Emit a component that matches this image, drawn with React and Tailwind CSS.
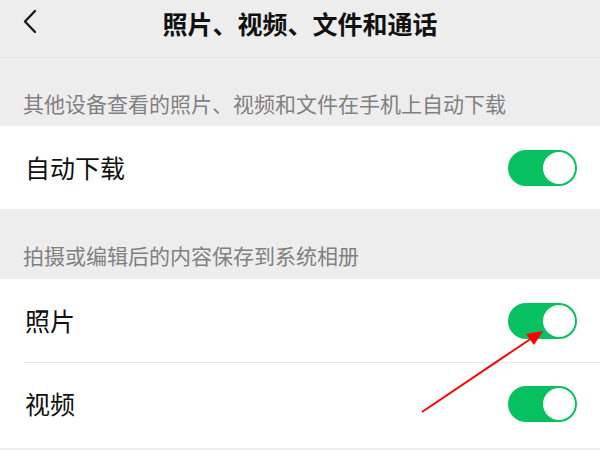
import React from 'react'

const Toggle = () => (
  <div className="w-[69px] h-[36px] rounded-full bg-[#07c160] flex items-center justify-end pr-[2px]">
    <div className="w-[32px] h-[32px] rounded-full bg-white" />
  </div>
)

const Row = ({ label, divider }) => (
  <div className="relative h-[83px] flex items-center justify-between pl-[25px] pr-[23px]">
    {divider && <div className="absolute top-0 left-[24px] right-0 h-px bg-[#e8e8e8]" />}
    <span className="text-[25px] leading-[25px] text-[#111111]">{label}</span>
    <Toggle />
  </div>
)

const Caption = ({ children, top, bottom }) => (
  <div className={`px-[23px] text-[21px] leading-[21px] text-[#808080] ${top} ${bottom}`}>{children}</div>
)

const App = () => {
  return (
    <div className="relative w-[600px] h-[450px] overflow-hidden bg-[#ededed] font-['Noto_Sans_CJK_SC',sans-serif]">
      <div className="relative h-[58px] border-b border-[#e4e4e4]">
        <svg className="absolute left-[21px] top-[9px]" width="18" height="26" viewBox="0 0 18 26" fill="none">
          <polyline points="14,2 4,12.5 14,23" stroke="#1a1a1a" strokeWidth="2.4" strokeLinecap="round" strokeLinejoin="round" />
        </svg>
        <div className="pt-[11px] text-center text-[25px] leading-[25px] font-bold text-[#111111]">
          照片、视频、文件和通话
        </div>
      </div>

      <Caption top="pt-[35px]" bottom="pb-[12px]">其他设备查看的照片、视频和文件在手机上自动下载</Caption>
      <div className="bg-white">
        <Row label="自动下载" />
      </div>

      <Caption top="pt-[36px]" bottom="pb-[13px]">拍摄或编辑后的内容保存到系统相册</Caption>
      <div className="bg-white">
        <Row label="照片" />
        <div className="h-[86px]">
          <Row label="视频" divider />
        </div>
      </div>

      <svg className="absolute inset-0 pointer-events-none" width="600" height="450" viewBox="0 0 600 450">
        <line x1="422" y1="412" x2="532" y2="338" stroke="#ff0000" strokeWidth="2" />
        <polygon points="543,331 534,345 526,334" fill="#ff0000" />
      </svg>
    </div>
  )
}

export default App
